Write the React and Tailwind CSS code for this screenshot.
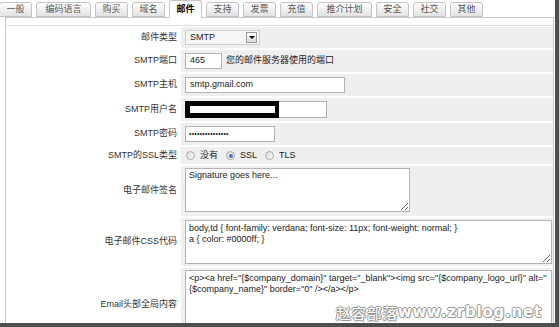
import React from 'react';

const tabs = ['一般', '编码语言', '购买', '域名', '邮件', '支持', '发票', '充值', '推介计划', '安全', '社交', '其他'];

function Tab({ label, active }) {
  const wide = label.length > 2;
  return (
    <div
      className={`${wide ? 'w-[55px]' : 'w-[33px]'} ${
        active
          ? 'h-[18px] -mb-[1px] relative z-10 bg-white border-b-0 font-bold text-black'
          : 'h-[15px] bg-gradient-to-b from-white to-[#e2e2e2] text-[#555]'
      } shrink-0 border border-[#c4c4c4] rounded-t-[3px] flex items-center justify-center text-[9px]`}
    >
      {label}
    </div>
  );
}

function Row({ label, className, align = 'items-center', children }) {
  return (
    <div className={`flex ${className}`}>
      <div className="w-[175px] shrink-0 flex items-center justify-end pr-[4px] text-[#333]">{label}</div>
      <div className={`flex-1 flex ${align} bg-[#efefef] pl-[4px] pr-[1px]`}>{children}</div>
    </div>
  );
}

function Radio({ checked }) {
  return (
    <span className="w-[9px] h-[9px] rounded-full border border-[#a8a8a8] bg-gradient-to-br from-[#d8d8d8] to-white flex items-center justify-center shrink-0">
      {checked && <span className="w-[4px] h-[4px] rounded-full bg-[#4a76b0]" />}
    </span>
  );
}

export default function App() {
  return (
    <div className="relative w-[559px] h-[327px] overflow-hidden bg-white border-r-4 border-b-4 border-[#4e4e4e] font-['Liberation_Sans','Noto_Sans_CJK_SC',sans-serif] text-[9px] text-[#222]">
      {/* tab strip */}
      <div className="flex items-end gap-[4px] h-[17px] -ml-[1px]">
        {tabs.map(t => (
          <Tab key={t} label={t} active={t === '邮件'} />
        ))}
      </div>

      {/* panel */}
      <div className="ml-[5px] mr-[1px] h-[320px] border border-[#c8c8c8] bg-white pt-[7px]">
        <div className="border-t border-[#dedede] pt-[1px] flex flex-col gap-[2px]">
          <Row label="邮件类型" className="h-[21px]">
            <div className="w-[75px] h-[15px] border border-[#cfcfcf] bg-[#f6f6f6] flex items-center justify-between pl-[4px] pr-[2px]">
              <span>SMTP</span>
              <span className="w-[11px] h-[11px] border border-[#9a9a9a] bg-gradient-to-b from-white to-[#dcdcdc] flex items-center justify-center">
                <span className="w-0 h-0 border-l-[3px] border-r-[3px] border-t-[3px] border-l-transparent border-r-transparent border-t-black" />
              </span>
            </div>
          </Row>
          <Row label="SMTP端口" className="h-[22px]">
            <div className="w-[37px] h-[16px] border border-[#b4b4b4] bg-white flex items-center pl-[4px]">465</div>
            <span className="ml-[4px]">您的邮件服务器使用的端口</span>
          </Row>
          <Row label="SMTP主机" className="h-[22px]">
            <div className="w-[160px] h-[16px] border border-[#b4b4b4] bg-white flex items-center pl-[4px]">smtp.gmail.com</div>
          </Row>
          <Row label="SMTP用户名" className="h-[23px]">
            <div className="w-[142px] h-[17px] flex">
              <div className="w-[94px] h-full bg-black flex items-center pl-[5px]">
                <span className="w-[85px] h-[7px] bg-white" />
              </div>
              <div className="flex-1 border-y border-r border-[#b4b4b4] bg-white" />
            </div>
          </Row>
          <Row label="SMTP密码" className="h-[22px]">
            <div className="w-[90px] h-[16px] border border-[#b4b4b4] bg-white flex items-center pl-[3px] text-[7px] tracking-[0.2px]">
              •••••••••••••••
            </div>
          </Row>
          <Row label="SMTP的SSL类型" className="h-[17px]">
            <div className="flex items-center gap-[5px] pl-[1px]">
              <Radio />
              <span className="mr-[3px]">没有</span>
              <Radio checked />
              <span className="mr-[3px]">SSL</span>
              <Radio />
              <span>TLS</span>
            </div>
          </Row>
          <Row label="电子邮件签名" className="h-[50px]" align="items-start pt-[2px]">
            <textarea
              readOnly
              defaultValue="Signature goes here..."
              className="w-[225px] h-[44px] border border-[#b4b4b4] bg-white px-[3px] py-[1px] leading-[11px] overflow-hidden outline-none"
            />
          </Row>
          <Row label="电子邮件CSS代码" className="h-[48px]" align="items-start pt-[2px]">
            <textarea
              readOnly
              defaultValue={'body,td { font-family: verdana; font-size: 11px; font-weight: normal; }\na { color: #0000ff; }'}
              className="w-full h-[44px] border border-[#b4b4b4] bg-white px-[3px] py-[2px] leading-[11px] overflow-hidden whitespace-pre outline-none"
            />
          </Row>
          <Row label="Email头部全局内容" className="h-[74px]" align="items-start pt-[2px]">
            <textarea
              readOnly
              defaultValue={'<p><a href="{$company_domain}" target="_blank"><img src="{$company_logo_url}" alt="\n{$company_name}" border="0" /></a></p>'}
              className="w-full h-[68px] border border-[#b4b4b4] bg-white px-[3px] py-[2px] leading-[11px] overflow-hidden whitespace-pre outline-none"
            />
          </Row>
        </div>
      </div>

      {/* watermark overlay */}
      <div className="absolute right-[13px] bottom-[3px] flex items-end leading-none text-white [text-shadow:1px_0_#9a9a9a,-1px_0_#9a9a9a,0_1px_#9a9a9a,0_-1px_#9a9a9a,1px_1px_#b0b0b0]">
        <span className="text-[15px] tracking-[0.5px] font-['Noto_Sans_CJK_SC',sans-serif]">赵容部落</span>
        <span className="text-[15px] tracking-[0.8px] font-bold font-['DejaVu_Sans',sans-serif]">www.zrblog.net</span>
      </div>
    </div>
  );
}
